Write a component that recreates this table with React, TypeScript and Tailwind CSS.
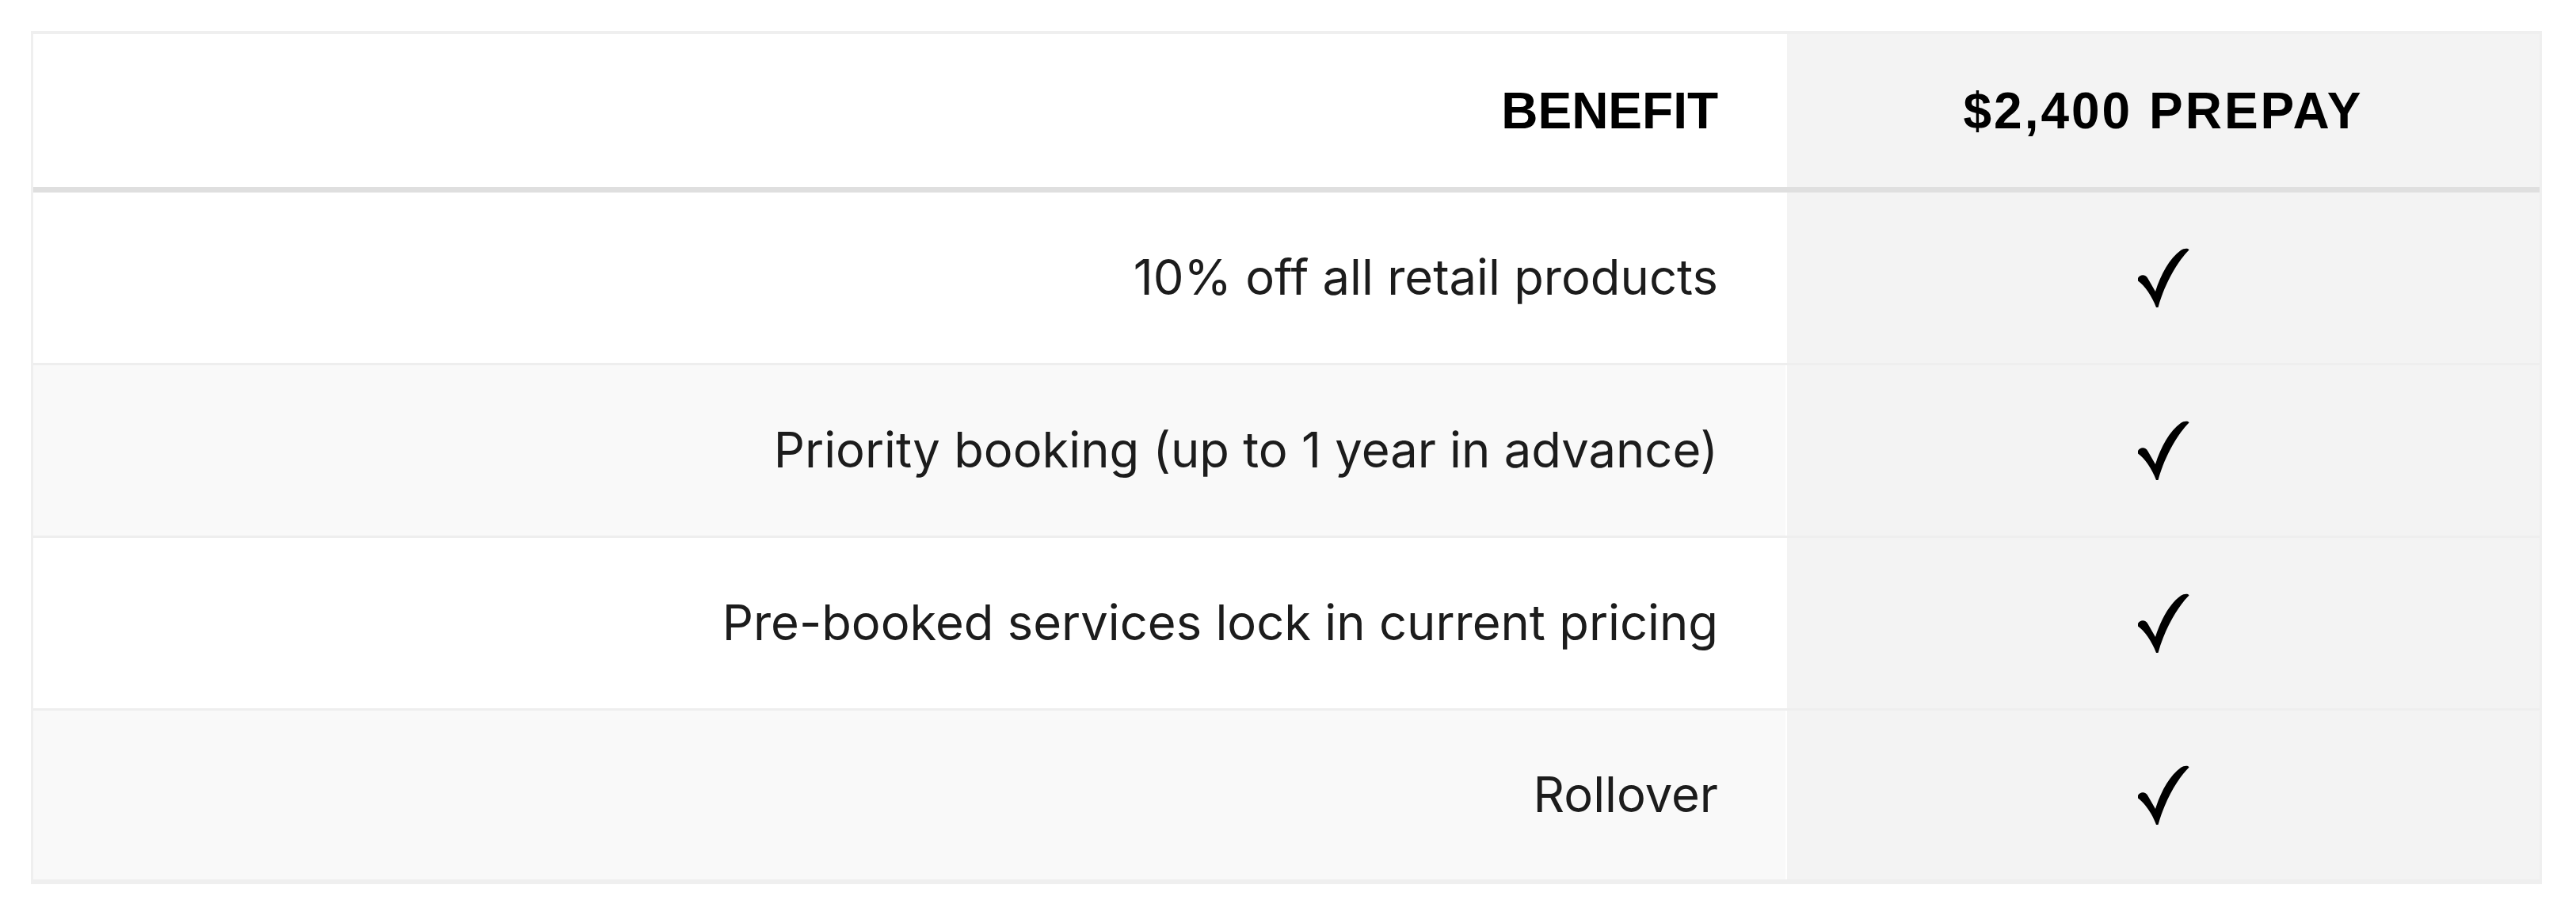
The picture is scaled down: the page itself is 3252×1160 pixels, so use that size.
const ROWS = [
  "10% off all retail products",
  "Priority booking (up to 1 year in advance)",
  "Pre-booked services lock in current pricing",
  "Rollover",
];

function Check() {
  return (
    <svg width="66" height="76" viewBox="0 0 66 76" className="block">
      <path
        d="M1 38 C4 33 10.5 33 13.5 38.5 L23 55 C30 33 41 13 55 3 C59 0 65 0 65.5 2.5 C53 15 36 41 26.5 75 L24 75 C19 61 9 47 1 41.5 Z"
        fill="#000"
      />
    </svg>
  );
}

export default function App() {
  return (
    <div className="min-h-screen bg-white pt-[39px] pl-[39px]">
      <div className="w-[3170px] border-x-[3px] border-t-4 border-b-[6px] border-[#efefef]">
        {/* Header */}
        <div className="flex h-[200px] border-b-[7px] border-[#dfdfdf] font-['Liberation_Sans',Arial,sans-serif] font-bold text-[64px] text-black">
          <div className="w-[2214px] flex items-center justify-end pr-[87px] bg-white">
            BENEFIT
          </div>
          <div className="w-[950px] flex items-center justify-center bg-[#f3f3f3] tracking-[3px]">
            $2,400 PREPAY
          </div>
        </div>

        {/* Rows */}
        {ROWS.map((label, i) => {
          const last = i === ROWS.length - 1;
          return (
            <div
              key={label}
              className={
                last
                  ? "flex h-[213px]"
                  : "flex h-[218px] border-b-[3px] border-[#eeeeee]"
              }
            >
              <div
                className={
                  (i % 2 === 1 ? "bg-[#f9f9f9] " : "bg-white ") +
                  "w-[2212px] flex items-center justify-end pr-[85px] font-['Inter',sans-serif] text-[61.5px] text-[#1c1c1c]"
                }
              >
                {label}
              </div>
              <div className="w-[952px] flex items-center justify-center bg-[#f3f3f3] border-l-2 border-white">
                <Check />
              </div>
            </div>
          );
        })}
      </div>
    </div>
  );
}
